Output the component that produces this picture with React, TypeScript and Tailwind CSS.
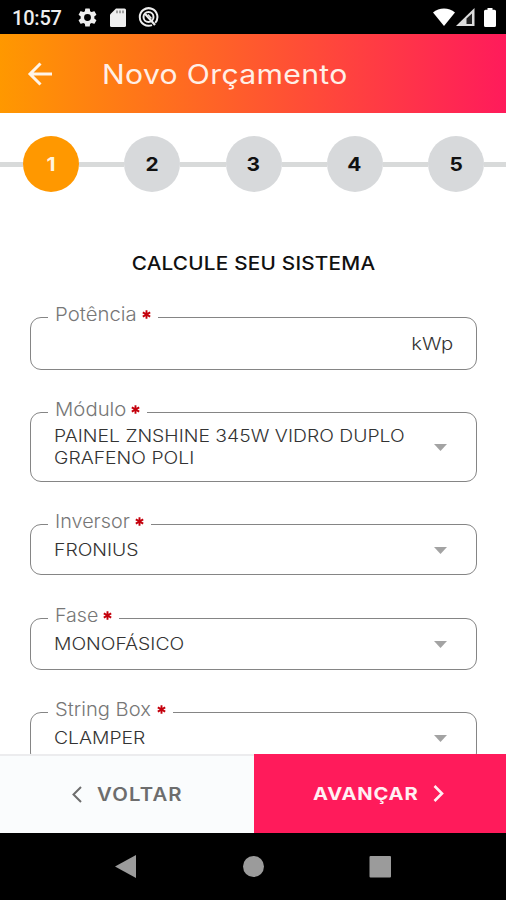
import React from 'react'
import clsx from 'clsx'

interface FieldProps {
    label: string
    className: string
    labelWidth: string
    labelScale: string
    children: React.ReactNode
}

const Field: React.FC<FieldProps> = ({ label, className, labelWidth, labelScale, children }) => (
    <fieldset className={clsx('ml-[30px] mr-[29px] rounded-[11px] border border-[#858585] min-w-0 shrink-0', className)}>
        <legend className="ml-[17px] h-[29px] px-[7px] flex items-start text-[18.5px] leading-[22px] font-light text-[#777]">
            <span className={clsx('whitespace-nowrap', labelWidth)}>
                <span className={clsx('inline-block origin-left', labelScale)}>{label}</span>
            </span>
            <svg className="ml-[6px] mt-[7px] shrink-0" width="9" height="9" viewBox="0 0 9 9" stroke="#c4000c" strokeWidth="1.9">
                <path d="M4.5 0.3v8.4M0.8 2.4l7.4 4.2M8.2 2.4L0.8 6.6" />
            </svg>
        </legend>
        {children}
    </fieldset>
)

const Caret = () => (
    <svg className="shrink-0" width="13" height="7" viewBox="0 0 13 7" fill="#a3a3a3">
        <path d="M0 0h13L6.5 7z" />
    </svg>
)

interface SelectProps {
    className?: string
    children: React.ReactNode
}

const SelectValue: React.FC<SelectProps> = ({ className, children }) => (
    <div className={clsx('flex items-center justify-between pl-[23px] pr-[29px] text-[17px] leading-[22px] font-light text-[#333]', className)}>
        <div className="whitespace-nowrap origin-left scale-x-[1.138]">{children}</div>
        <Caret />
    </div>
)

const StatusBar = () => (
    <div className="h-[34px] bg-black flex items-center justify-between pl-3 pr-[10px] shrink-0">
        <div className="flex items-center">
            <span className="w-[66px] pt-[2px] font-[Roboto] text-[20px] font-medium text-[#eee] tracking-[-0.2px]">10:57</span>
            <svg width="19" height="19" viewBox="2 2 20 20" fill="#eee">
                <path d="M19.14 12.94c.04-.3.06-.61.06-.94 0-.32-.02-.64-.07-.94l2.03-1.58a.49.49 0 0 0 .12-.61l-1.92-3.32a.49.49 0 0 0-.59-.22l-2.39.96c-.5-.38-1.03-.7-1.62-.94l-.36-2.54a.48.48 0 0 0-.48-.41h-3.84a.48.48 0 0 0-.47.41l-.36 2.54c-.59.24-1.13.57-1.62.94l-2.39-.96a.48.48 0 0 0-.59.22L2.74 8.87a.48.48 0 0 0 .12.61l2.03 1.58c-.05.3-.09.63-.09.94s.02.64.07.94l-2.03 1.58a.49.49 0 0 0-.12.61l1.92 3.32c.12.22.37.29.59.22l2.39-.96c.5.38 1.03.7 1.62.94l.36 2.54c.05.24.24.41.48.41h3.84c.24 0 .44-.17.47-.41l.36-2.54c.59-.24 1.13-.56 1.62-.94l2.39.96c.22.08.47 0 .59-.22l1.92-3.32a.48.48 0 0 0-.12-.61zM12 15.6a3.6 3.6 0 1 1 0-7.2 3.6 3.6 0 0 1 0 7.2z" />
            </svg>
            <svg className="ml-[13px]" width="16" height="19" viewBox="0 0 16 19">
                <path d="M6 0.5h8.5A1.5 1.5 0 0 1 16 2v15.5a1.5 1.5 0 0 1-1.5 1.5h-13A1.5 1.5 0 0 1 0 17.5V6.5z" fill="#eee" />
                <path d="M7 2.6v2.6M10 2.6v2.6M13 2.6v2.6" stroke="#777" strokeWidth="1.3" />
            </svg>
            <svg className="ml-[12px]" width="21" height="20" viewBox="0 0 21 20" fill="none" stroke="#eee">
                <path d="M17.2 15.8A8.8 8.8 0 1 0 14 18.1" strokeWidth="2" />
                <circle cx="10.5" cy="10" r="5" strokeWidth="2" />
                <path d="M7.2 7l9.8 11" strokeWidth="2.2" />
                <path d="M10 7.5l3.5 4" strokeWidth="1.4" />
            </svg>
        </div>
        <div className="flex items-center">
            <svg width="22" height="18" viewBox="0 0 22 18" fill="#fff">
                <path d="M11 18L0 4.6C6-1 16-1 22 4.6z" />
            </svg>
            <svg className="ml-[1px]" width="19" height="18" viewBox="0 0 19 18">
                <path d="M0 18L18.5 0v18z" fill="#ddd" />
                <path d="M10.5 10.5l5.5-5V16h-5.5z" fill="#222" />
            </svg>
            <svg className="ml-[9px]" width="12" height="19" viewBox="0 0 12 19" fill="#fff">
                <path d="M3.5 0h5v1.7h2A1.5 1.5 0 0 1 12 3.2v14.3a1.5 1.5 0 0 1-1.5 1.5h-9A1.5 1.5 0 0 1 0 17.5V3.2a1.5 1.5 0 0 1 1.5-1.5h2z" />
            </svg>
        </div>
    </div>
)

const Header = () => (
    <header className="h-[79px] shrink-0 flex items-center pl-[27px] bg-linear-to-r/srgb from-[#ff9800] to-[#ff1b5b]">
        <svg width="26" height="24" viewBox="0 0 26 24" fill="none" stroke="#fff4e8" strokeWidth="3">
            <path d="M25 12H3M13.5 1.5L3 12l10.5 10.5" />
        </svg>
        <h1 className="ml-[49px] pt-[2px] text-[27px] leading-8 font-normal origin-left scale-x-[1.117] tracking-[0.3px] text-[#ffefe6] whitespace-nowrap">
            Novo Orçamento
        </h1>
    </header>
)

const steps = [1, 2, 3, 4, 5]

const Stepper = () => (
    <div className="mt-[23px] -mr-px flex shrink-0">
        {steps.map((step) => (
            <div key={step} className="flex-1 flex items-center">
                <div className="h-[5px] flex-1 bg-[#d8dada]" />
                <div
                    className={clsx(
                        'size-14 rounded-full flex items-center justify-center pt-[2px] text-[19px] font-bold',
                        step === 1 ? 'bg-[#ff9800] text-[#fff4e0]' : 'bg-[#d7d9db] text-[#111]'
                    )}
                >
                    <span className="scale-x-110">{step}</span>
                </div>
                <div className="h-[5px] flex-1 bg-[#d8dada]" />
            </div>
        ))}
    </div>
)

const Footer = () => (
    <div className="h-[79px] shrink-0 flex text-[18px] leading-[22px]">
        <button className="w-[254px] flex items-center pl-[72px] bg-[#fafcfd] border-t-2 border-[#ececee] font-semibold text-[#6d6d6d]">
            <svg width="10" height="17" viewBox="0 0 10 17" fill="none" stroke="currentColor" strokeWidth="2">
                <path d="M9 1L1.5 8.5 9 16" />
            </svg>
            <span className="ml-[15px] origin-left scale-x-[1.13] tracking-[1px]">VOLTAR</span>
        </button>
        <button className="flex-1 flex items-center pl-[59px] bg-[#ff1b5b] font-bold text-[#fff0f3]">
            <span className="w-[120px] text-left origin-left scale-x-[1.12] tracking-[0.7px]">AVANÇAR</span>
            <svg width="11" height="17" viewBox="0 0 11 17" fill="none" stroke="currentColor" strokeWidth="2.6">
                <path d="M1.5 1L9 8.5 1.5 16" />
            </svg>
        </button>
    </div>
)

const NavBar = () => (
    <div className="h-[67px] shrink-0 bg-black">
        <svg width="506" height="67" viewBox="0 0 506 67" fill="#9b9b9b">
            <path d="M115 33.5L136 22v23z" />
            <circle cx="253.5" cy="33.5" r="10.5" />
            <rect x="369.5" y="23" width="21.5" height="21.5" rx="1" />
        </svg>
    </div>
)

const App = () => (
    <div className="w-[506px] h-[900px] flex flex-col bg-white overflow-hidden font-[Inter,sans-serif]">
        <StatusBar />
        <Header />
        <main className="flex-1 min-h-0 overflow-hidden flex flex-col">
            <Stepper />
            <h2 className="mt-[60px] h-6 mb-[27px] -mr-px text-center text-[19px] leading-6 font-medium scale-x-[1.09] tracking-[0.2px] text-[#111] shrink-0">
                CALCULE SEU SISTEMA
            </h2>

            <Field label="Potência" className="h-[67px] mb-[28px]" labelWidth="w-[81px]" labelScale="scale-x-[1.1]">
                <div className="flex justify-end pt-px pr-[23px] text-[17.5px] leading-[22px] font-light text-[#333]">
                    <span className="origin-right scale-x-[1.16]">kWp</span>
                </div>
            </Field>
            <Field label="Módulo" className="h-[84px] mb-[28px]" labelWidth="w-[70px]" labelScale="scale-x-[1.1]">
                <SelectValue className="-mt-[2px]">
                    <p>PAINEL ZNSHINE 345W VIDRO DUPLO</p>
                    <p>GRAFENO POLI</p>
                </SelectValue>
            </Field>
            <Field label="Inversor" className="h-[65px] mb-[29px]" labelWidth="w-[74px]" labelScale="scale-x-[1.07]">
                <SelectValue>
                    <p>FRONIUS</p>
                </SelectValue>
            </Field>
            <Field label="Fase" className="h-[66px] mb-[28px]" labelWidth="w-[42px]" labelScale="scale-x-[1.06]">
                <SelectValue>
                    <p>MONOFÁSICO</p>
                </SelectValue>
            </Field>
            <Field label="String Box" className="h-[66px]" labelWidth="w-[96px]" labelScale="scale-x-[1.09]">
                <SelectValue>
                    <p>CLAMPER</p>
                </SelectValue>
            </Field>
        </main>
        <Footer />
        <NavBar />
    </div>
)

export default App
